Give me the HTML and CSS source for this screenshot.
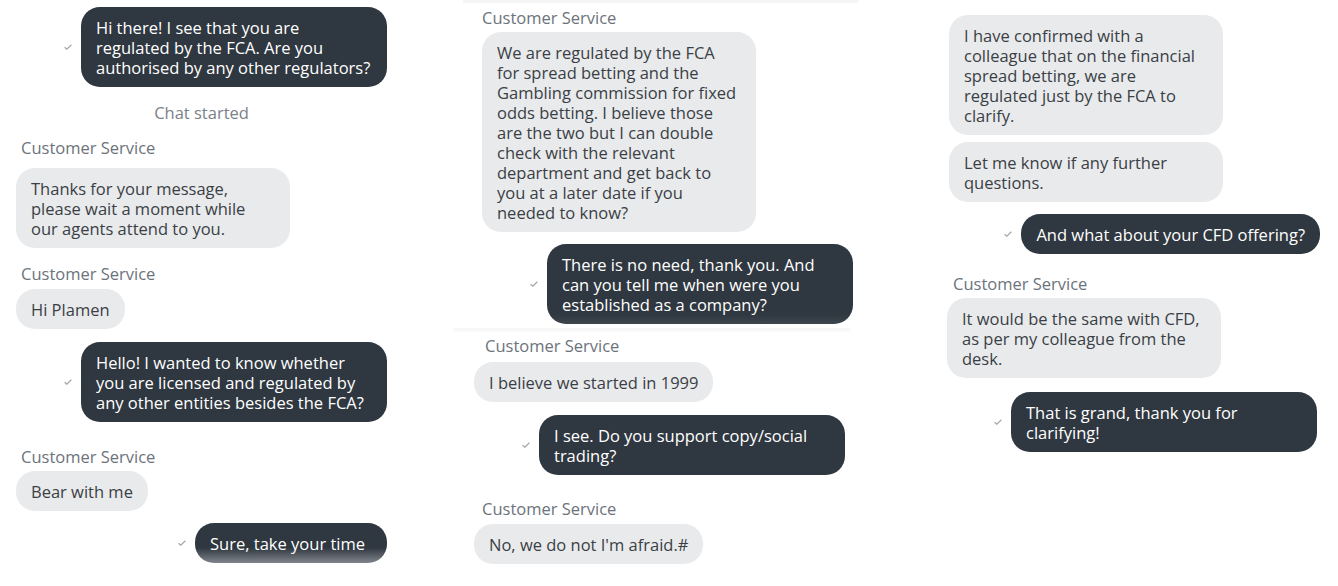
FILE: index.html
```html
<!DOCTYPE html>
<html lang="en">
<head>
    <meta charset="UTF-8">
    <meta name="viewport" content="width=device-width, initial-scale=1.0">
    <title>Customer Service Chat</title>
    <link rel="stylesheet" href="styles.css">
</head>
<body>
    <div class="board">
        <!-- first screenshot -->
        <div class="col col-1">
            <div class="shot shot-1a">
                <div class="row out mt-7">
                    <svg class="tick" viewBox="0 0 8 6"><path d="M0.6 3.2 L2.8 5.2 L7.4 0.8"/></svg>
                    <div class="bubble dark">Hi there! I see that you are regulated by the FCA. Are you authorised by any other regulators?</div>
                </div>
                <div class="notice mt-16">Chat started</div>
                <div class="label in-5 mt-15">Customer Service</div>
                <div class="row mt-10">
                    <div class="bubble light">Thanks for your message, please wait a moment while our agents attend to you.</div>
                </div>
                <div class="label in-5 mt-16">Customer Service</div>
                <div class="row mt-5">
                    <div class="bubble light">Hi Plamen</div>
                </div>
                <div class="row out mt-13">
                    <svg class="tick" viewBox="0 0 8 6"><path d="M0.6 3.2 L2.8 5.2 L7.4 0.8"/></svg>
                    <div class="bubble dark">Hello! I wanted to know whether you are licensed and regulated by any other entities besides the FCA?</div>
                </div>
                <div class="label in-5 mt-25">Customer Service</div>
                <div class="row mt-4">
                    <div class="bubble light">Bear with me</div>
                </div>
                <div class="row out mt-12">
                    <svg class="tick" viewBox="0 0 8 6"><path d="M0.6 3.2 L2.8 5.2 L7.4 0.8"/></svg>
                    <div class="bubble dark fade wide-end">Sure, take your time</div>
                </div>
            </div>
        </div>

        <!-- second screenshot -->
        <div class="col col-2">
            <div class="edge edge-top"></div>
            <div class="shot shot-2a">
                <div class="label mt-5">Customer Service</div>
                <div class="row mt-4">
                    <div class="bubble light">We are regulated by the FCA for spread betting and the Gambling commission for fixed odds betting. I believe those are the two but I can double check with the relevant department and get back to you at a later date if you needed to know?</div>
                </div>
                <div class="row out mt-12">
                    <svg class="tick" viewBox="0 0 8 6"><path d="M0.6 3.2 L2.8 5.2 L7.4 0.8"/></svg>
                    <div class="bubble dark soft-fade">There is no need, thank you. And can you tell me when were you established as a company?</div>
                </div>
            </div>
            <div class="edge edge-mid mt-4"></div>
            <div class="shot shot-2b">
                <div class="label in-11 mt-4">Customer Service</div>
                <div class="row mt-6">
                    <div class="bubble light">I believe we started in 1999</div>
                </div>
                <div class="row out mt-13">
                    <svg class="tick" viewBox="0 0 8 6"><path d="M0.6 3.2 L2.8 5.2 L7.4 0.8"/></svg>
                    <div class="bubble dark">I see. Do you support copy/social trading?</div>
                </div>
                <div class="label in-8 mt-24">Customer Service</div>
                <div class="row mt-5">
                    <div class="bubble light">No, we do not I'm afraid.#</div>
                </div>
            </div>
        </div>

        <!-- third screenshot -->
        <div class="col col-3">
            <div class="shot shot-3a">
                <div class="row mt-15">
                    <div class="bubble light">I have confirmed with a colleague that on the financial spread betting, we are regulated just by the FCA to clarify.</div>
                </div>
                <div class="row mt-7">
                    <div class="bubble light">Let me know if any further questions.</div>
                </div>
                <div class="row out mt-12">
                    <svg class="tick" viewBox="0 0 8 6"><path d="M0.6 3.2 L2.8 5.2 L7.4 0.8"/></svg>
                    <div class="bubble dark">And what about your CFD offering?</div>
                </div>
            </div>
            <div class="shot shot-3b">
                <div class="label in-6 mt-20">Customer Service</div>
                <div class="row mt-4">
                    <div class="bubble light">It would be the same with CFD, as per my colleague from the desk.</div>
                </div>
                <div class="row out mt-14">
                    <svg class="tick" viewBox="0 0 8 6"><path d="M0.6 3.2 L2.8 5.2 L7.4 0.8"/></svg>
                    <div class="bubble dark">That is grand, thank you for clarifying!</div>
                </div>
            </div>
        </div>
    </div>
</body>
</html>
```

FILE: styles.css
```css
body {
    margin: 0;
    background-color: #ffffff;
    font-family: "Open Sans", "Noto Sans", Arial, sans-serif;
    font-size: 16.5px;
    line-height: 20px;
    color: #3a3f45;
}
.board {
    display: flex;
    width: 1338px;
    height: 586px;
    overflow: hidden;
}
.col {
    display: flex;
    flex-direction: column;
}
.col-1 {
    width: 450px;
}
.col-2 {
    width: 450px;
}
.col-3 {
    width: 438px;
}
.shot {
    display: flex;
    flex-direction: column;
    width: 371px;
}
.shot-1a {
    margin-left: 16px;
}
.shot-2a {
    margin-left: 32px;
}
.shot-2b {
    margin-left: 24px;
}
.shot-3a {
    margin-left: 49px;
}
.shot-3b {
    margin-left: 47px;
    width: 370px;
}

/* faint edges left over from the cropped screenshots */
.edge {
    height: 3px;
    background: #f5f5f5;
}
.edge-top {
    margin-left: 13px;
    width: 395px;
}
.edge-mid {
    margin-left: 3px;
    width: 397px;
    height: 4px;
    background: linear-gradient(#f5f6f7, #fbfbfb);
}

.row {
    display: flex;
    align-items: center;
}
.row.out {
    justify-content: flex-end;
    gap: 9px;
}
.tick {
    width: 8px;
    height: 6px;
    fill: none;
    stroke: #a2a6ab;
    stroke-width: 1.2;
}
.bubble {
    padding: 11px 15px 9px;
    border-radius: 19px;
}
.bubble.light {
    max-width: 244px;
    background: #e9eaec;
    color: #3a3f45;
}
.bubble.dark {
    max-width: 276px;
    background: #2f3740;
    color: #ffffff;
}
.bubble.fade {
    background: linear-gradient(#2f3740 0, #2f3740 62%, #80858b 100%);
}
.bubble.soft-fade {
    background: linear-gradient(#2f3740 0, #2f3740 88%, #3d454d 100%);
}
.bubble.wide-end {
    padding-right: 22px;
}
.label {
    color: #6c737b;
}
.notice {
    text-align: center;
    color: #7a8188;
}
.in-5 { padding-left: 5px; }
.in-6 { padding-left: 6px; }
.in-8 { padding-left: 8px; }
.in-11 { padding-left: 11px; }

.mt-4 { margin-top: 4px; }
.mt-5 { margin-top: 5px; }
.mt-6 { margin-top: 6px; }
.mt-7 { margin-top: 7px; }
.mt-10 { margin-top: 10px; }
.mt-12 { margin-top: 12px; }
.mt-13 { margin-top: 13px; }
.mt-14 { margin-top: 14px; }
.mt-15 { margin-top: 15px; }
.mt-16 { margin-top: 16px; }
.mt-20 { margin-top: 20px; }
.mt-24 { margin-top: 24px; }
.mt-25 { margin-top: 25px; }
```
